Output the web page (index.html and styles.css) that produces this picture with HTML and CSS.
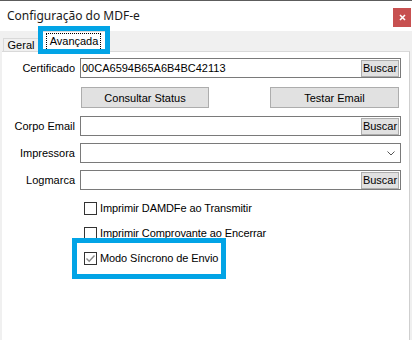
FILE: index.html
```html
<!DOCTYPE html>
<html>
<head>
  <link rel="stylesheet" href="styles.css">
</head>
<body>
  <div class="window">
    <div class="titlebar">
      <span class="title">Configuração do MDF-e</span>
      <span class="close">
        <svg width="7" height="7" viewBox="0 0 7 7"><path d="M1 1 L6 6 M6 1 L1 6" stroke="#fff" stroke-width="1.6"/></svg>
      </span>
    </div>

    <div class="tabs">
      <div class="tab">Geral</div>
      <div class="tab active"><span class="focus">Avançada</span></div>
      <div class="mark tab-mark"></div>
    </div>

    <div class="panel">
      <div class="form">
        <label>Certificado</label>
        <div class="field">
          <span class="value">00CA6594B65A6B4BC42113</span>
          <button class="btn small">Buscar</button>
        </div>

        <span></span>
        <div class="actions">
          <button class="btn wide">Consultar Status</button>
          <button class="btn wide">Testar Email</button>
        </div>

        <label>Corpo Email</label>
        <div class="field">
          <span class="value"></span>
          <button class="btn small">Buscar</button>
        </div>

        <label>Impressora</label>
        <div class="field select">
          <span class="value"></span>
          <svg class="chevron" width="8" height="5" viewBox="0 0 8 5"><path d="M0.5 0.5 L4 4 L7.5 0.5" fill="none" stroke="#555" stroke-width="1"/></svg>
        </div>

        <label>Logmarca</label>
        <div class="field">
          <span class="value"></span>
          <button class="btn small">Buscar</button>
        </div>
      </div>

      <div class="checks">
        <div class="check">
          <span class="box"></span>
          <span>Imprimir DAMDFe ao Transmitir</span>
        </div>
        <div class="check">
          <span class="box"></span>
          <span>Imprimir Comprovante ao Encerrar</span>
        </div>
        <div class="check">
          <span class="box checked">
            <svg width="11" height="11" viewBox="0 0 11 11"><path d="M1.5 5.5 L4.2 8.2 L9.5 2.5" fill="none" stroke="#8a8a8a" stroke-width="1.4"/></svg>
          </span>
          <span>Modo Síncrono de Envio</span>
          <div class="mark check-mark"></div>
        </div>
      </div>
    </div>
  </div>
</body>
</html>
```

FILE: styles.css
```css
body {
  margin: 0;
  background-color: #f0f0f0;
  font-family: "Liberation Sans", Arial, sans-serif;
  font-size: 11px;
  color: #000000;
}

.window {
  width: 412px;
  height: 340px;
  display: flex;
  flex-direction: column;
  overflow: hidden;
}

.titlebar {
  height: 30px;
  border-top: 1px solid #5c5c5c;
  background-color: #ffffff;
  display: flex;
  justify-content: space-between;
  align-items: flex-start;
}

.title {
  font-family: "Noto Sans", sans-serif;
  font-size: 12px;
  margin: 6px 0 0 7px;
  color: #1a1a1a;
}

.close {
  width: 18px;
  height: 19px;
  margin: 7px 1px 0 0;
  background-color: #c75050;
  display: flex;
  align-items: center;
  justify-content: center;
}

.tabs {
  height: 20px;
  display: flex;
  align-items: flex-end;
  padding-left: 3px;
  position: relative;
}

.tab {
  height: 12px;
  width: 34px;
  border: 1px solid #d9d9d9;
  border-bottom: none;
  background-color: #f0f0f0;
  display: flex;
  align-items: center;
  justify-content: center;
  line-height: 12px;
}

.tab.active {
  height: 20px;
  width: 65px;
  margin-left: 1px;
  margin-bottom: -1px;
  background-color: #ffffff;
  position: relative;
  z-index: 1;
  align-items: flex-start;
}

.focus {
  margin-top: 1px;
  padding: 1px 2px 3px 3px;
  border: 1px dotted #000000;
  line-height: 12px;
}

.mark {
  position: absolute;
  box-sizing: border-box;
  border: 5px solid #02a4e6;
  z-index: 2;
}

.tab-mark {
  left: 38px;
  top: -5px;
  width: 72px;
  height: 28px;
}

.panel {
  flex: 1;
  margin-left: 2px;
  width: 407px;
  background-color: #ffffff;
  border-top: 1px solid #d9d9d9;
  border-right: 1px solid #cfcfcf;
}

.form {
  display: grid;
  grid-template-columns: 73px 321px;
  column-gap: 5px;
  row-gap: 7px;
  padding-top: 6px;
  align-items: center;
}

.form label {
  text-align: right;
  white-space: nowrap;
}

.field {
  height: 20px;
  box-sizing: border-box;
  border: 1px solid #7a7a7a;
  display: flex;
  align-items: center;
  justify-content: space-between;
}

.value {
  padding-left: 1px;
}

.btn {
  font-family: "Liberation Sans", Arial, sans-serif;
  font-size: 11px;
  color: #000000;
  background-color: #e1e1e1;
  border: 1px solid #adadad;
  padding: 0;
}

.btn.small {
  width: 38px;
  height: 17px;
  margin-right: 1px;
}

.actions {
  display: flex;
  justify-content: space-between;
  padding: 0 2px 0 1px;
  margin: 2px 0 1px;
}

.btn.wide {
  height: 21px;
  width: 128px;
}

.btn.wide + .btn.wide {
  width: 129px;
}

.chevron {
  margin-right: 5px;
}

.checks {
  margin-top: 10px;
  display: flex;
  flex-direction: column;
  gap: 9px;
}

.check {
  height: 16px;
  padding-left: 82px;
  display: flex;
  align-items: center;
  gap: 3px;
  position: relative;
  letter-spacing: -0.1px;
}

.box {
  width: 13px;
  height: 13px;
  box-sizing: border-box;
  border: 1px solid #333333;
  background-color: #ffffff;
  display: flex;
  align-items: center;
  justify-content: center;
}

.check-mark {
  left: 70px;
  top: -12px;
  width: 154px;
  height: 41px;
}
```
